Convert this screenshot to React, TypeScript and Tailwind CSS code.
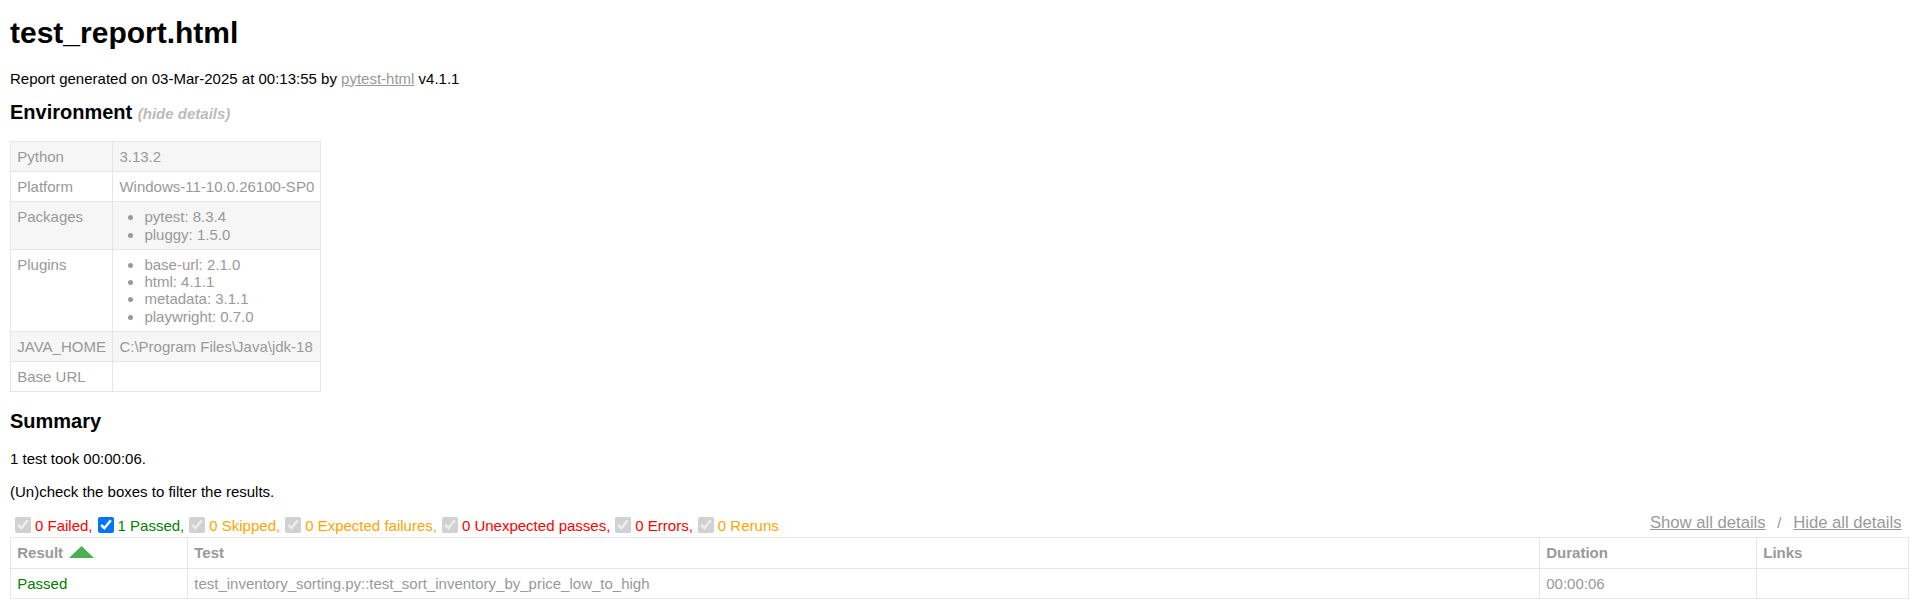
import React from "react";

const envRows: { name: string; value: string | string[] }[] = [
  { name: "Python", value: "3.13.2" },
  { name: "Platform", value: "Windows-11-10.0.26100-SP0" },
  { name: "Packages", value: ["pytest: 8.3.4", "pluggy: 1.5.0"] },
  {
    name: "Plugins",
    value: ["base-url: 2.1.0", "html: 4.1.1", "metadata: 3.1.1", "playwright: 0.7.0"],
  },
  { name: "JAVA_HOME", value: "C:\\Program Files\\Java\\jdk-18" },
  { name: "Base URL", value: "" },
];

const filters = [
  { label: "0 Failed,", color: "text-[#ff0000]", enabled: false },
  { label: "1 Passed,", color: "text-[#008000]", enabled: true },
  { label: "0 Skipped,", color: "text-[#ffa500]", enabled: false },
  { label: "0 Expected failures,", color: "text-[#ffa500]", enabled: false },
  { label: "0 Unexpected passes,", color: "text-[#ff0000]", enabled: false },
  { label: "0 Errors,", color: "text-[#ff0000]", enabled: false },
  { label: "0 Reruns", color: "text-[#ffa500]", enabled: false },
];

function SortArrow() {
  return (
    <svg width="25" height="12" viewBox="0 0 25 12" className="inline-block ml-[6px] align-baseline">
      <polygon points="0,12 12.5,0 25,12" fill="#4caf50" />
    </svg>
  );
}

export default function App() {
  return (
    <div className="min-h-screen bg-white px-[10px] pt-[16px] font-['Liberation_Sans',Arial,sans-serif] text-[15px] text-[#999]">
      <h1 className="text-[30px] leading-[34.5px] font-bold text-black">test_report.html</h1>

      <p className="mt-[19px] leading-[17.25px] text-black">
        Report generated on 03-Mar-2025 at 00:13:55 by{" "}
        <a href="#" className="text-[#999] underline">
          pytest-html
        </a>{" "}
        v4.1.1
      </p>

      {/* environment */}
      <h2 className="mt-[14px] text-[20px] leading-[23px] font-bold text-black">
        Environment <span className="text-[15px] italic text-[#bbb]">(hide details)</span>
      </h2>

      <table className="mt-[16px] border-collapse">
        <tbody>
          {envRows.map((row, i) => (
            <tr key={row.name} className={i % 2 === 0 ? "bg-[#f6f6f6]" : ""}>
              <td className="border border-[#e6e6e6] px-[6.25px] py-[6px] leading-[17.25px] align-top">
                {row.name}
              </td>
              <td className="border border-[#e6e6e6] px-[6.25px] py-[6px] leading-[17.25px] align-top">
                {Array.isArray(row.value) ? (
                  <ul className="list-disc pl-[25px] pr-[25px]">
                    {row.value.map((v) => (
                      <li key={v}>{v}</li>
                    ))}
                  </ul>
                ) : (
                  row.value
                )}
              </td>
            </tr>
          ))}
        </tbody>
      </table>

      {/* summary */}
      <h2 className="mt-[18px] text-[20px] leading-[23px] font-bold text-black">Summary</h2>
      <p className="mt-[17px] leading-[17.25px] text-black">1 test took 00:00:06.</p>
      <p className="mt-[15px] leading-[17.25px] text-black">(Un)check the boxes to filter the results.</p>

      <div className="mt-[14px] flex h-[23px] items-center justify-between">
        <div className="flex items-center">
          {filters.map((f) => (
            <div key={f.label} className="flex items-center">
              <input
                type="checkbox"
                checked
                readOnly
                disabled={!f.enabled}
                className="ml-[5px] mr-[4px] h-4 w-4"
              />
              <span className={`leading-[17.25px] ${f.color}`}>{f.label}</span>
            </div>
          ))}
        </div>
        <div className="mb-[5px] flex items-center text-[#999]">
          <button className="px-[7.5px] text-[16.67px] underline">Show all details</button>
          <span>&nbsp;/&nbsp;</span>
          <button className="px-[7.5px] text-[16.67px] underline">Hide all details</button>
        </div>
      </div>

      <table className="w-full table-fixed border-collapse border border-[#e6e6e6]">
        <thead>
          <tr>
            <th className="w-[177px] border border-[#e6e6e6] p-[6.25px] text-left font-bold leading-[17.25px]">
              Result
              <SortArrow />
            </th>
            <th className="border border-[#e6e6e6] p-[6.25px] text-left font-bold leading-[17.25px]">Test</th>
            <th className="w-[217px] border border-[#e6e6e6] p-[6.25px] text-left font-bold leading-[17.25px]">
              Duration
            </th>
            <th className="w-[152px] border border-[#e6e6e6] p-[6.25px] text-left font-bold leading-[17.25px]">
              Links
            </th>
          </tr>
        </thead>
        <tbody>
          <tr>
            <td className="border border-[#e6e6e6] p-[6.25px] leading-[17.25px] text-[#008000]">Passed</td>
            <td className="border border-[#e6e6e6] p-[6.25px] leading-[17.25px]">
              test_inventory_sorting.py::test_sort_inventory_by_price_low_to_high
            </td>
            <td className="border border-[#e6e6e6] p-[6.25px] leading-[17.25px]">00:00:06</td>
            <td className="border border-[#e6e6e6] p-[6.25px] leading-[17.25px]"></td>
          </tr>
        </tbody>
      </table>
    </div>
  );
}
